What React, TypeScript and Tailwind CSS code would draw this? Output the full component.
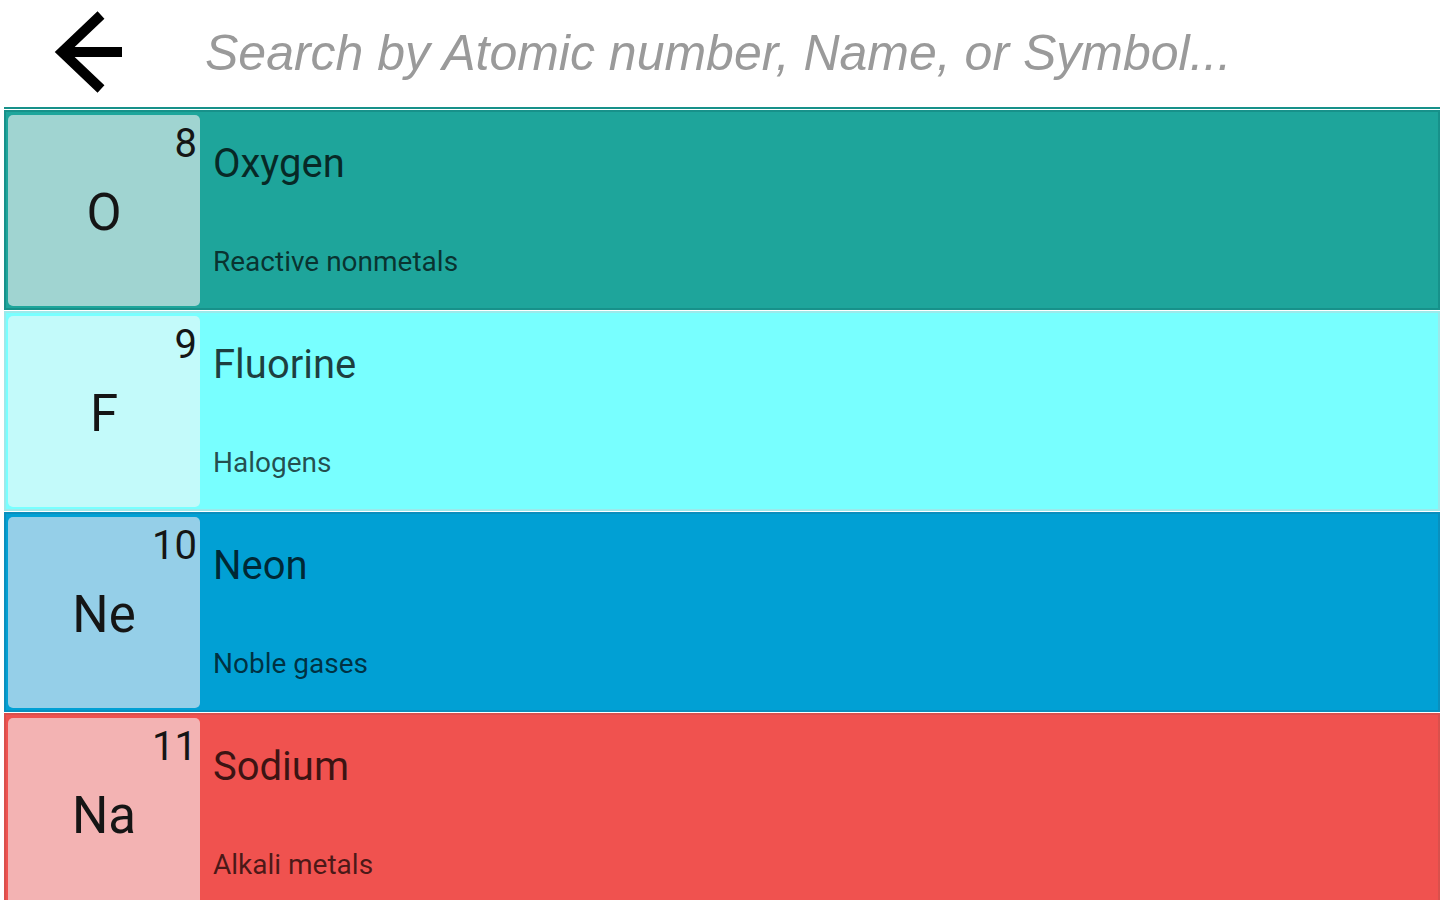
import React from 'react'

type Element = {
  number: number
  symbol: string
  name: string
  category: string
  row: string
  edge: string
  box: string
}

const ELEMENTS: Element[] = [
  { number: 8, symbol: 'O', name: 'Oxygen', category: 'Reactive nonmetals', row: 'bg-[#1ea59b]', edge: 'border-[#17918a]', box: 'bg-[#a0d4d1]' },
  { number: 9, symbol: 'F', name: 'Fluorine', category: 'Halogens', row: 'bg-[#78ffff]', edge: 'border-[#9ce9ea]', box: 'bg-[#c3fafa]' },
  { number: 10, symbol: 'Ne', name: 'Neon', category: 'Noble gases', row: 'bg-[#01a0d4]', edge: 'border-[#0a8fbd]', box: 'bg-[#95cfe8]' },
  { number: 11, symbol: 'Na', name: 'Sodium', category: 'Alkali metals', row: 'bg-[#f0524f]', edge: 'border-[#d9504c]', box: 'bg-[#f3b3b3]' },
]

function BackArrow() {
  return (
    <svg width="90" height="107" viewBox="0 0 90 107" fill="none">
      <path d="M82 52H22" stroke="#000" strokeWidth="10" />
      <path d="M61 15L22 52L61 89" stroke="#000" strokeWidth="10" strokeLinejoin="miter" />
    </svg>
  )
}

function ElementRow({ el }: { el: Element }) {
  return (
    <div className={`flex h-[200px] ml-[4px] mb-[1px] border-2 ${el.edge} ${el.row} p-[2px] pt-[3px]`}>
      <div className={`relative flex w-[192px] shrink-0 items-center justify-center rounded-[5px] ${el.box}`}>
        <span className="absolute right-[3px] top-[9px] text-[40px] leading-none text-[#151515]">{el.number}</span>
        <span className="mt-[4px] text-[51px] leading-none text-[#151515]">{el.symbol}</span>
      </div>
      <div className="flex flex-col pl-[13px] pt-[29px]">
        <span className="text-[40px] leading-none text-black/75">{el.name}</span>
        <span className="mt-[64px] text-[28px] leading-none text-black/70">{el.category}</span>
      </div>
    </div>
  )
}

export default function App() {
  return (
    <div className="h-[900px] w-[1440px] overflow-hidden bg-white" style={{ fontFamily: 'Roboto, "Liberation Sans", sans-serif' }}>
      <div className="flex h-[107px] items-center">
        <div className="ml-[40px] flex h-[107px] w-[90px] items-center">
          <BackArrow />
        </div>
        <input
          className="ml-[75px] w-[1200px] bg-transparent text-[50px] outline-none placeholder:italic placeholder:text-[#9a9a9a]"
          style={{ fontFamily: '"Liberation Sans", Arial, sans-serif' }}
          placeholder="Search by Atomic number, Name, or Symbol..."
        />
      </div>
      <div className="ml-[4px] h-[2px] bg-[#17918a]" />
      <div className="mt-[1px]">
        {ELEMENTS.map((el) => (
          <ElementRow key={el.number} el={el} />
        ))}
      </div>
    </div>
  )
}
